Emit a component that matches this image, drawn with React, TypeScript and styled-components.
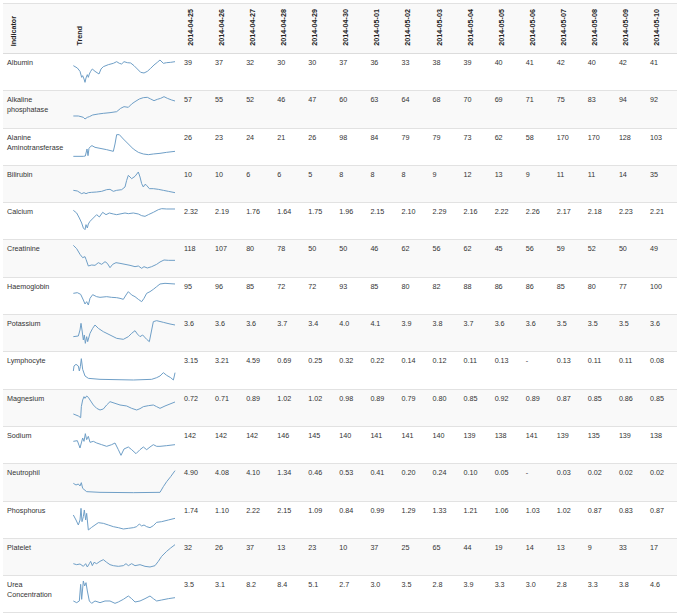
import styled, { createGlobalStyle } from 'styled-components';

const GlobalStyle = createGlobalStyle`
  body {
    margin: 0;
    background: #fff;
    font-family: "Liberation Sans", Arial, sans-serif;
    color: #333;
  }
`;

const COLUMNS = '66px 111px repeat(16, 1fr)';

const Table = styled.div`
  width: 674px;
  margin: 3px 0 0 3px;
  font-size: 7.2px;
  line-height: 10px;
`;

const HeadRow = styled.div`
  display: grid;
  grid-template-columns: ${COLUMNS};
  box-sizing: border-box;
  height: 51px;
  border-top: 1px solid #e2e2e2;
  border-bottom: 1px solid #dcdcdc;
  background: #f9f9f9;
`;

const HeadCell = styled.div`
  display: flex;
  align-items: flex-end;
  padding: 0 0 7px 6px;
  font-weight: bold;
  color: #222;
`;

const VerticalText = styled.span`
  writing-mode: vertical-rl;
  transform: rotate(180deg);
  white-space: nowrap;
  line-height: 10px;
`;

const Row = styled.div<{ $striped: boolean }>`
  display: grid;
  grid-template-columns: ${COLUMNS};
  box-sizing: border-box;
  height: 37.3px;
  border-bottom: 1px solid #e2e2e2;
  background: ${(p) => (p.$striped ? '#f9f9f9' : '#fff')};
`;

const Cell = styled.div`
  padding: 4px;
  color: #333;
  white-space: nowrap;
`;

const NameCell = styled(Cell)`
  white-space: normal;
  padding-right: 2px;
`;

const TrendCell = styled.div`
  display: flex;
  padding: 0;
  svg {
    display: block;
    width: 100%;
    height: 100%;
  }
`;

type P = [number, number];

const Sparkline = ({ points }: { points: P[] }) => (
  <svg viewBox="207 0 333 112" preserveAspectRatio="none">
    <polyline
      points={points.map(([x, y]) => `${x},${y}`).join(' ')}
      fill="none"
      stroke="#6f9fc7"
      strokeWidth={1}
      strokeLinejoin="round"
      vectorEffect="non-scaling-stroke"
    />
  </svg>
);

const dates = [
  '2014-04-25', '2014-04-26', '2014-04-27', '2014-04-28', '2014-04-29', '2014-04-30',
  '2014-05-01', '2014-05-02', '2014-05-03', '2014-05-04', '2014-05-05', '2014-05-06',
  '2014-05-07', '2014-05-08', '2014-05-09', '2014-05-10',
];

interface Indicator {
  name: string;
  values: string;
  trend: P[];
}

const indicators: Indicator[] = [
  {
    name: 'Albumin',
    values: '39 37 32 30 30 37 36 33 38 39 40 41 42 40 42 41',
    trend: [[220,35],[232,42],[240,52],[245,70],[248,65],[252,75],[255,85],[258,72],[262,62],[265,70],[268,60],[272,52],[277,45],[285,52],[297,60],[303,45],[310,38],[325,32],[340,28],[350,23],[358,28],[365,30],[372,23],[382,26],[392,27],[402,35],[412,45],[422,55],[432,57],[442,52],[452,43],[462,33],[472,25],[480,18],[490,28],[500,26],[512,25],[525,23]],
  },
  {
    name: 'Alkaline phosphatase',
    values: '57 55 52 46 47 60 63 64 68 70 69 71 75 83 94 92',
    trend: [[220,75],[235,75],[243,77],[250,79],[255,84],[262,79],[268,77],[278,72],[295,69],[310,67],[330,65],[350,62],[362,52],[372,47],[385,49],[395,39],[405,32],[418,24],[430,20],[442,19],[452,24],[462,29],[472,25],[482,22],[492,17],[502,22],[515,27],[525,30]],
  },
  {
    name: 'Alanine Aminotransferase',
    values: '26 23 24 21 26 98 84 79 79 73 62 58 170 170 128 103',
    trend: [[220,82],[250,82],[256,81],[261,60],[264,80],[267,58],[272,52],[276,50],[285,55],[300,58],[320,62],[340,67],[345,45],[350,17],[358,17],[370,30],[385,45],[400,60],[415,70],[430,75],[445,77],[460,75],[480,73],[500,70],[525,67]],
  },
  {
    name: 'Bilirubin',
    values: '10 10 6 6 5 8 8 8 9 12 13 9 11 11 14 35',
    trend: [[220,73],[232,75],[245,83],[252,80],[258,83],[265,80],[275,79],[290,78],[305,76],[320,71],[330,70],[340,76],[350,73],[365,71],[375,63],[380,43],[385,28],[395,38],[405,31],[415,18],[420,33],[425,53],[430,63],[435,55],[440,58],[448,68],[460,68],[475,70],[490,73],[505,76],[525,80]],
  },
  {
    name: 'Calcium',
    values: '2.32 2.19 1.76 1.64 1.75 1.96 2.15 2.10 2.29 2.16 2.22 2.26 2.17 2.18 2.23 2.21',
    trend: [[220,22],[230,30],[238,45],[245,60],[250,75],[255,80],[258,65],[262,75],[265,63],[270,55],[280,45],[290,35],[298,42],[308,28],[318,35],[328,30],[340,33],[350,35],[360,33],[375,30],[385,32],[400,30],[415,33],[425,38],[435,40],[445,35],[460,28],[475,20],[485,17],[500,18],[525,18]],
  },
  {
    name: 'Creatinine',
    values: '118 107 80 78 50 50 46 62 56 62 45 56 59 52 50 49',
    trend: [[220,16],[230,26],[240,43],[248,53],[255,50],[258,58],[265,78],[275,75],[285,76],[295,68],[305,73],[315,65],[322,70],[330,83],[338,73],[348,68],[360,70],[375,73],[390,76],[405,80],[415,78],[425,85],[432,80],[442,84],[455,80],[470,73],[480,66],[492,60],[505,61],[525,61]],
  },
  {
    name: 'Haemoglobin',
    values: '95 96 85 72 72 93 85 80 82 88 86 86 85 80 77 100',
    trend: [[220,46],[232,44],[242,49],[250,66],[255,78],[260,71],[265,81],[270,61],[278,50],[290,56],[300,58],[320,56],[335,58],[350,59],[360,61],[370,64],[378,51],[385,41],[395,51],[405,56],[415,64],[425,71],[432,61],[440,46],[450,41],[460,34],[470,26],[480,18],[495,16],[525,18]],
  },
  {
    name: 'Potassium',
    values: '3.6 3.6 3.6 3.7 3.4 4.0 4.1 3.9 3.8 3.7 3.6 3.6 3.5 3.5 3.5 3.6',
    trend: [[220,65],[235,63],[240,45],[243,25],[246,45],[250,75],[253,60],[256,85],[260,65],[263,80],[270,55],[278,40],[285,30],[295,40],[310,50],[330,60],[350,70],[370,73],[385,65],[395,55],[405,47],[412,57],[420,65],[428,60],[440,73],[448,80],[455,45],[460,20],[470,17],[490,22],[510,27],[525,30]],
  },
  {
    name: 'Lymphocyte',
    values: '3.15 3.21 4.59 0.69 0.25 0.32 0.22 0.14 0.12 0.11 0.13 - 0.13 0.11 0.11 0.08',
    trend: [[220,57],[222,42],[228,37],[235,42],[238,57],[241,44],[244,20],[248,52],[255,72],[265,79],[300,82],[400,84],[455,82],[470,77],[480,72],[490,62],[500,70],[512,77],[520,84],[523,72],[525,62]],
  },
  {
    name: 'Magnesium',
    values: '0.72 0.71 0.89 1.02 1.02 0.98 0.89 0.79 0.80 0.85 0.92 0.89 0.87 0.85 0.86 0.85',
    trend: [[220,72],[235,78],[242,83],[244,50],[248,30],[252,20],[255,25],[260,18],[265,22],[270,30],[280,45],[290,55],[300,60],[310,57],[320,45],[330,35],[345,40],[360,45],[380,48],[395,55],[410,60],[420,56],[430,50],[445,47],[460,45],[470,50],[480,55],[495,48],[510,42],[525,36]],
  },
  {
    name: 'Sodium',
    values: '142 142 142 146 145 140 141 141 140 139 138 141 139 135 139 138',
    trend: [[220,43],[232,41],[240,63],[244,48],[248,33],[252,43],[256,20],[260,38],[265,28],[270,46],[280,43],[290,48],[305,53],[320,58],[335,53],[345,48],[355,68],[363,85],[372,66],[385,60],[395,68],[408,80],[420,68],[430,60],[440,68],[450,60],[460,53],[470,58],[480,58],[500,56],[525,53]],
  },
  {
    name: 'Neutrophil',
    values: '4.90 4.08 4.10 1.34 0.46 0.53 0.41 0.20 0.24 0.10 0.05 - 0.03 0.02 0.02 0.02',
    trend: [[220,58],[228,63],[235,60],[240,66],[244,56],[248,73],[260,83],[300,85],[400,86],[480,85],[490,68],[500,53],[512,38],[525,20]],
  },
  {
    name: 'Phosphorus',
    values: '1.74 1.10 2.22 2.15 1.09 0.84 0.99 1.29 1.33 1.21 1.06 1.03 1.02 0.87 0.83 0.87',
    trend: [[220,39],[228,54],[235,69],[240,54],[243,19],[246,59],[250,44],[253,24],[257,54],[260,34],[265,84],[275,76],[285,69],[295,62],[310,64],[325,69],[340,74],[355,77],[370,81],[385,79],[400,77],[410,74],[418,66],[425,72],[432,69],[440,74],[450,77],[460,71],[470,61],[485,59],[505,54],[525,49]],
  },
  {
    name: 'Platelet',
    values: '32 26 37 13 23 10 37 25 65 44 19 14 13 9 33 17',
    trend: [[220,74],[230,77],[240,75],[250,82],[257,74],[262,84],[268,74],[272,67],[277,80],[282,70],[290,74],[300,67],[310,62],[320,70],[330,77],[340,80],[355,82],[370,80],[378,74],[385,80],[395,74],[405,80],[420,77],[435,82],[450,84],[465,80],[475,67],[485,52],[500,37],[512,27],[525,17]],
  },
  {
    name: 'Urea Concentration',
    values: '3.5 3.1 8.2 8.4 5.1 2.7 3.0 3.5 2.8 3.9 3.3 3.0 2.8 3.3 3.8 4.6',
    trend: [[220,75],[230,80],[238,75],[242,25],[245,70],[250,15],[254,30],[258,20],[262,45],[268,75],[275,82],[285,75],[300,80],[315,75],[330,75],[345,82],[355,78],[370,70],[385,60],[395,68],[405,78],[420,75],[435,68],[450,60],[460,68],[470,75],[485,72],[505,68],[525,65]],
  },
];

const App = () => (
  <>
    <GlobalStyle />
    <Table>
      <HeadRow>
        <HeadCell>
          <VerticalText>Indicator</VerticalText>
        </HeadCell>
        <HeadCell>
          <VerticalText>Trend</VerticalText>
        </HeadCell>
        {dates.map((d) => (
          <HeadCell key={d}>
            <VerticalText>{d}</VerticalText>
          </HeadCell>
        ))}
      </HeadRow>
      {indicators.map((ind, idx) => (
        <Row key={ind.name} $striped={idx % 2 === 1}>
          <NameCell>{ind.name}</NameCell>
          <TrendCell>
            <Sparkline points={ind.trend} />
          </TrendCell>
          {ind.values.split(' ').map((v, i) => (
            <Cell key={i}>{v}</Cell>
          ))}
        </Row>
      ))}
    </Table>
  </>
);

export default App;
